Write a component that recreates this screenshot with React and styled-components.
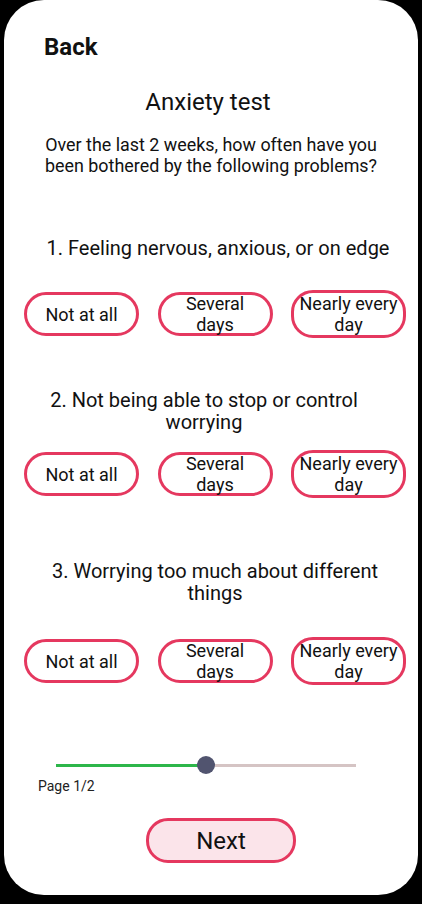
import React, { useState } from 'react';
import styled, { createGlobalStyle } from 'styled-components';

const GlobalStyle = createGlobalStyle`
  html, body {
    margin: 0;
    padding: 0;
    background: #000;
  }
  body {
    font-family: Roboto, "Noto Sans", "Liberation Sans", sans-serif;
    color: #111;
  }
`;

const PINK = '#e5385f';

const Screen = styled.div`
  width: 414px;
  height: 895px;
  margin: 0 4px;
  background: #fff;
  border-radius: 40px;
  box-sizing: border-box;
  padding-top: 33px;
  display: flex;
  flex-direction: column;
`;

const BackLink = styled.button`
  align-self: flex-start;
  margin-left: 40px;
  padding: 0;
  border: none;
  background: none;
  font-family: inherit;
  font-size: 24px;
  line-height: 28px;
  font-weight: 700;
  color: #111;
  cursor: pointer;
`;

const Title = styled.h1`
  margin: 27px 0 0;
  font-size: 24px;
  line-height: 28px;
  font-weight: 400;
  text-align: center;
  transform: translateX(-3px);
`;

const Intro = styled.p`
  margin: 18px auto 0;
  width: 350px;
  font-size: 17.9px;
  line-height: 21px;
  text-align: center;
`;

const Question = styled.h2`
  margin: ${(p) => p.$top}px 0 0 ${(p) => 32 + p.$shift}px;
  width: 350px;
  font-size: 20px;
  line-height: 22px;
  font-weight: 400;
  text-align: center;
`;

const Options = styled.div`
  margin-top: ${(p) => p.$top}px;
  height: 48px;
  padding: 0 12px 0 20px;
  display: flex;
  align-items: center;
  justify-content: space-between;
`;

const Option = styled.button`
  width: 115px;
  height: ${(p) => (p.$tall ? 48 : 44)}px;
  box-sizing: border-box;
  padding: 0;
  border: 3px solid ${PINK};
  border-radius: 22px;
  background: ${(p) => (p.$picked ? '#fbe4ea' : '#fff')};
  font-family: inherit;
  font-size: 18px;
  line-height: 21px;
  color: #111;
  display: flex;
  align-items: center;
  justify-content: center;
  text-align: center;
  cursor: pointer;
`;

const Progress = styled.div`
  position: relative;
  margin: 71px 0 0 52px;
  width: 300px;
  height: 18px;
  display: flex;
  align-items: center;
`;

const Done = styled.div`
  height: 3px;
  background: #2db64a;
`;

const Left = styled.div`
  flex: 1;
  height: 3px;
  background: #d5c4c4;
`;

const Thumb = styled.div`
  position: absolute;
  top: 0;
  width: 18px;
  height: 18px;
  margin-left: -9px;
  border-radius: 50%;
  background: #51546f;
`;

const PageLabel = styled.div`
  margin: 4px 0 0 34px;
  font-size: 14px;
  line-height: 17px;
  color: #222;
`;

const NextButton = styled.button`
  align-self: center;
  margin: 23px 0 0 20px;
  width: 150px;
  height: 45px;
  box-sizing: border-box;
  border: 3px solid ${PINK};
  border-radius: 22px;
  background: #fbe4ea;
  font-family: inherit;
  font-size: 24px;
  color: #111;
  cursor: pointer;
`;

const answers = [
  { key: 'none', lines: ['Not at all'] },
  { key: 'some', lines: ['Several', 'days'] },
  { key: 'most', lines: ['Nearly every', 'day'], tall: true },
];

const questions = [
  { id: 1, text: '1. Feeling nervous, anxious, or on edge', top: 61, shift: 7, gap: 31 },
  { id: 2, text: '2. Not being able to stop or control worrying', top: 51, shift: -7, gap: 17 },
  { id: 3, text: '3. Worrying too much about different things', top: 62, shift: 4, gap: 33 },
];

const App = () => {
  const [picked, setPicked] = useState({});
  const progress = 0.5;

  return (
    <>
      <GlobalStyle />
      <Screen>
        <BackLink>Back</BackLink>
        <Title>Anxiety test</Title>
        <Intro>Over the last 2 weeks, how often have you been bothered by the following problems?</Intro>

        {questions.map((q) => (
          <React.Fragment key={q.id}>
            <Question $top={q.top} $shift={q.shift}>{q.text}</Question>
            <Options $top={q.gap}>
              {answers.map((a) => (
                <Option
                  key={a.key}
                  $tall={a.tall}
                  $picked={picked[q.id] === a.key}
                  onClick={() => setPicked({ ...picked, [q.id]: a.key })}
                >
                  <span>
                    {a.lines.map((l, i) => (
                      <React.Fragment key={l}>
                        {i > 0 && <br />}
                        {l}
                      </React.Fragment>
                    ))}
                  </span>
                </Option>
              ))}
            </Options>
          </React.Fragment>
        ))}

        <Progress>
          <Done style={{ width: `${progress * 100}%` }} />
          <Left />
          <Thumb style={{ left: `${progress * 100}%` }} />
        </Progress>
        <PageLabel>Page 1/2</PageLabel>
        <NextButton>Next</NextButton>
      </Screen>
    </>
  );
};

export default App;
